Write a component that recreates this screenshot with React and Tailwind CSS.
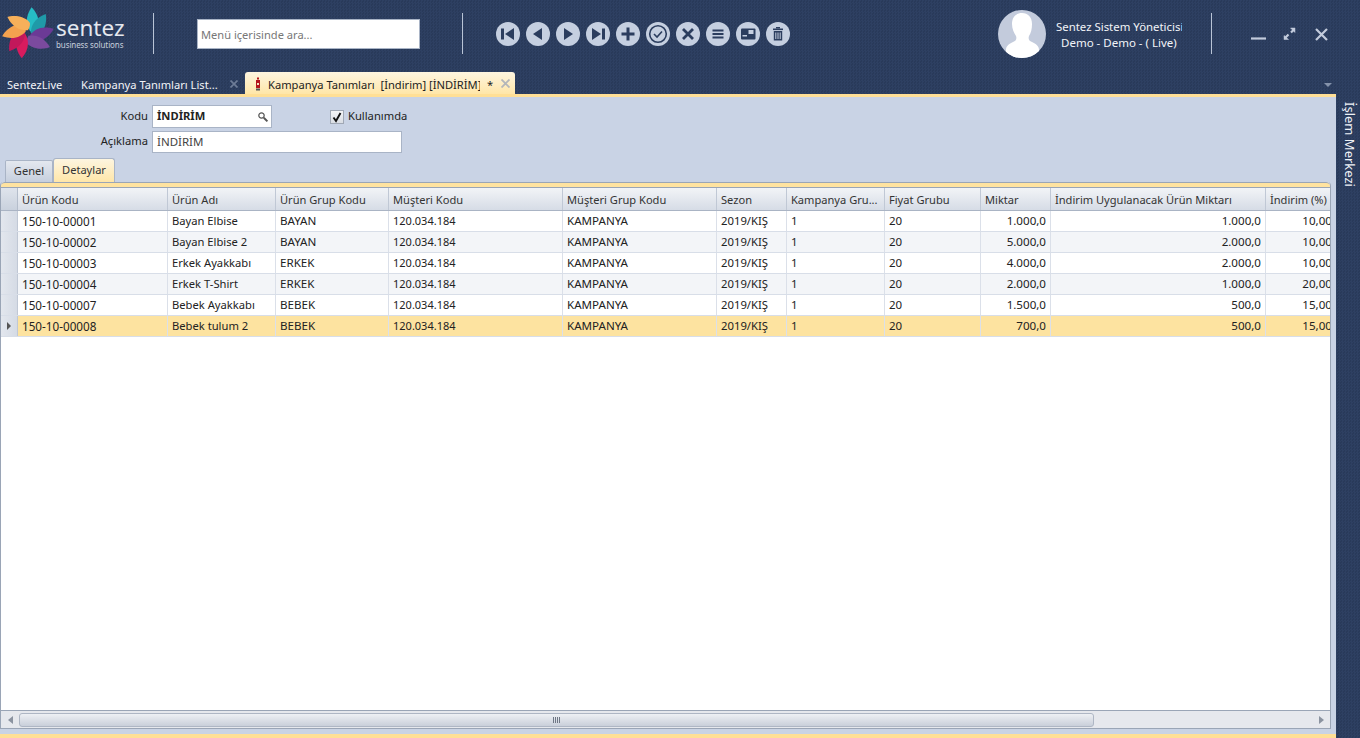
import React from "react";

const columns = [
  { title: "Ürün Kodu", w: "w-[150px]", size: "text-[11.7px]" },
  { title: "Ürün Adı", w: "w-[108px]", size: "text-[11.2px]" },
  { title: "Ürün Grup Kodu", w: "w-[113px]", size: "text-[11.6px]" },
  { title: "Müşteri Kodu", w: "w-[174px]", size: "text-[11px]" },
  { title: "Müşteri Grup Kodu", w: "w-[154px]", size: "text-[11.6px]" },
  { title: "Sezon", w: "w-[70px]", size: "text-[11.3px]" },
  { title: "Kampanya Gru...", w: "w-[98px]", size: "text-[11.5px]" },
  { title: "Fiyat Grubu", w: "w-[96px]", size: "text-[11.5px]" },
  { title: "Miktar", w: "w-[70px]", size: "text-[11.6px]", right: true },
  { title: "İndirim Uygulanacak Ürün Miktarı", w: "w-[215px]", size: "text-[11.6px]", right: true },
  { title: "İndirim (%)", w: "w-[71px]", size: "text-[11.6px]", right: true },
];

const rows = [
  ["150-10-00001", "Bayan Elbise", "BAYAN", "120.034.184", "KAMPANYA", "2019/KIŞ", "1", "20", "1.000,0", "1.000,0", "10,00"],
  ["150-10-00002", "Bayan Elbise 2", "BAYAN", "120.034.184", "KAMPANYA", "2019/KIŞ", "1", "20", "5.000,0", "2.000,0", "10,00"],
  ["150-10-00003", "Erkek Ayakkabı", "ERKEK", "120.034.184", "KAMPANYA", "2019/KIŞ", "1", "20", "4.000,0", "2.000,0", "10,00"],
  ["150-10-00004", "Erkek T-Shirt", "ERKEK", "120.034.184", "KAMPANYA", "2019/KIŞ", "1", "20", "2.000,0", "1.000,0", "20,00"],
  ["150-10-00007", "Bebek Ayakkabı", "BEBEK", "120.034.184", "KAMPANYA", "2019/KIŞ", "1", "20", "1.500,0", "500,0", "15,00"],
  ["150-10-00008", "Bebek tulum 2", "BEBEK", "120.034.184", "KAMPANYA", "2019/KIŞ", "1", "20", "700,0", "500,0", "15,00"],
];

const navy = "#2b3d5e";

// toolbar glyphs, drawn on a 24x24 circle
const toolIcons = [
  <g key="first" fill={navy}><rect x="5" y="6.5" width="3" height="11" /><path d="M18 6v12l-9-6z" /></g>,
  <path key="prev" fill={navy} d="M16 6v12l-9-6z" />,
  <path key="next" fill={navy} d="M8 6v12l9-6z" />,
  <g key="last" fill={navy}><rect x="16" y="6.5" width="3" height="11" /><path d="M6 6v12l9-6z" /></g>,
  <path key="plus" fill={navy} d="M10.5 5.5h3v5h5v3h-5v5h-3v-5h-5v-3h5z" />,
  <g key="ok" fill="none" stroke={navy}><circle cx="12" cy="12" r="8.3" strokeWidth="1.6" /><path d="M8 12l3 3 5-5.5" strokeWidth="1.6" /></g>,
  <path key="close" stroke={navy} strokeWidth="2.8" d="M7 7l10 10M17 7L7 17" />,
  <g key="menu" fill={navy}><rect x="6.5" y="7.5" width="11" height="2" /><rect x="6.5" y="11" width="11" height="2" /><rect x="6.5" y="14.5" width="11" height="2" /></g>,
  <g key="card"><rect x="5" y="6.5" width="14.5" height="11" rx="1" fill={navy} /><rect x="12.5" y="8" width="5" height="4" fill="#c5cfe0" /><rect x="6.5" y="13" width="4.5" height="1.5" fill="#c5cfe0" /></g>,
  <g key="trash" fill={navy}><rect x="7" y="6.5" width="10" height="1.6" /><rect x="10" y="5" width="4" height="1.5" /><path d="M7.8 9h8.4v9.5H7.8zM9.3 10.5v6.5h1v-6.5zM11.5 10.5v6.5h1v-6.5zM13.7 10.5v6.5h1v-6.5z" fillRule="evenodd" /></g>,
];

function Logo() {
  const petal = "M0 0C-5 -5 -8 -13 -3 -24C2 -21 9 -12 7 -3C5 -1 2 0 0 0Z";
  const petals = [
    [10, "#26bcc4"],
    [45, "#1f9aa8"],
    [83, "#6b3a96"],
    [125, "#7b4a9e"],
    [196, "#d81b5e"],
    [228, "#c2185b"],
    [265, "#f4a24f"],
    [310, "#f7b05a"],
  ];
  return (
    <svg width="54" height="54" viewBox="-27 -27 54 54" className="shrink-0">
      {petals.map(([r, c]) => (
        <path key={r} d={petal} fill={c} transform={`rotate(${r}) translate(2 -2)`} />
      ))}
    </svg>
  );
}

function Avatar() {
  return (
    <svg width="48" height="48" viewBox="0 0 48 48" className="shrink-0">
      <circle cx="24" cy="24" r="24" fill="#c3cbdc" />
      <clipPath id="av"><circle cx="24" cy="24" r="24" /></clipPath>
      <g clipPath="url(#av)" fill="#fff">
        <path d="M24 3c6 0 10 4 10 11 0 5-1 9-3 12-1 3 0 5 3 6 4 2 7 4 7 8v8H8v-8c0-4 3-6 7-8 3-1 4-3 3-6-2-3-4-7-4-12 0-7 4-11 10-11z" />
      </g>
    </svg>
  );
}

function Sep() {
  return <div className="w-px h-[41px] bg-[#b9c4d6] shrink-0 -mt-[3px]" />;
}

function Header() {
  return (
    <div className="h-[70px] flex items-center shrink-0 text-white">
      <div className="ml-[1px] flex items-center w-[152px] shrink-0 -mt-[4px]">
        <Logo />
        <div className="ml-[1px] -mt-[1px]">
          <div className="text-[22.5px] leading-[24px] text-[#e4e8ef]">sentez</div>
          <div className="text-[8px] leading-[10px] text-[#c7cfdc] tracking-[-0.1px]">business solutions</div>
        </div>
      </div>
      <Sep />
      <input
        placeholder="Menü içerisinde ara..."
        className="ml-[43px] w-[223px] h-[30px] bg-white px-[3px] text-[11.1px] text-black placeholder:text-[#777] border border-[#a9b4c6] shrink-0 -mt-[2px] outline-none"
      />
      <div className="ml-[42px]"><Sep /></div>
      <div className="ml-[33px] flex gap-[6px] shrink-0 -mt-[2px]">
        {toolIcons.map((g, i) => (
          <svg key={i} width="24" height="24" viewBox="0 0 24 24">
            <circle cx="12" cy="12" r="12" fill="#c5cfe0" />
            {g}
          </svg>
        ))}
      </div>
      <div className="ml-[208px] -mt-[2px]"><Avatar /></div>
      <div className="ml-[10px] w-[126px] text-[11.4px] leading-[16px] text-[#f2f4f8] shrink-0 overflow-hidden">
        <div className="whitespace-nowrap">Sentez Sistem Yöneticisi</div>
        <div className="whitespace-nowrap ml-[5px] w-[116px] overflow-hidden text-[11.5px]">Demo - Demo - ( Live)</div>
      </div>
      <div className="ml-[29px]"><Sep /></div>
      <svg width="110" height="20" viewBox="0 0 110 20" className="ml-[31px] shrink-0 -mt-[3px]" fill="none" stroke="#c3cbdc" strokeWidth="2.2">
        <path d="M8 14.5h15" />
        <path d="M42 14l3.5-3.5M48 8.5L51 5.5" />
        <path d="M41 11.5v4h4.5z M52 4h-4.5l4.5 4.5z" fill="#c3cbdc" strokeWidth="0.5" />
        <path d="M73 5l11 11M84 5L73 16" />
      </svg>
    </div>
  );
}

function TabStrip() {
  return (
    <div className="h-[24px] flex shrink-0 relative text-[11.15px]">
      <div className="ml-[7px] w-[56px] pt-[7px] text-[#f2f4f8] leading-[16px] whitespace-nowrap">SentezLive</div>
      <div className="ml-[18px] w-[136px] pt-[7px] text-[#f2f4f8] leading-[16px] whitespace-nowrap">Kampanya Tanımları List...</div>
      <svg width="8" height="8" viewBox="0 0 8 8" className="ml-[13px] mt-[10px]" stroke="#6d7c97" strokeWidth="1.7">
        <path d="M0.5 0.5l7 7M7.5 0.5l-7 7" />
      </svg>
      <div className="ml-[7px] mt-[2px] w-[270px] h-[22px] pt-[4px] rounded-t-[3px] bg-gradient-to-b from-[#fdf5e0] to-[#ffe6a8] flex items-center text-[#222] whitespace-pre">
        <svg width="6" height="14" viewBox="0 0 6 14" className="ml-[10px] -mt-[3px]">
          <rect x="1" y="3" width="4" height="8" fill="#b3141d" />
          <rect x="2" y="0.5" width="2" height="2" fill="#b3141d" />
          <rect x="2" y="6" width="2" height="2" fill="#f3e3c0" />
          <rect x="1" y="11.5" width="4" height="2" fill="#555" />
        </svg>
        <span className="ml-[7px] w-[212px] overflow-hidden">Kampanya Tanımları  [İndirim] [İNDİRİM]</span>
        <span className="ml-[7px] w-[9px]">*</span>
        <svg width="9" height="9" viewBox="0 0 9 9" className="ml-[5px] -mt-[3px]" stroke="#b4b6ba" strokeWidth="1.8">
          <path d="M0.5 0.5l8 8M8.5 0.5l-8 8" />
        </svg>
      </div>
      <div className="absolute right-[28px] top-[13px] w-0 h-0 border-l-[4px] border-r-[4px] border-t-[4px] border-l-transparent border-r-transparent border-t-[#8593ab]" />
    </div>
  );
}

function Form() {
  return (
    <div className="shrink-0 text-[11.2px] text-[#222]">
      <div className="flex items-center pt-[8px] h-[31px]">
        <label className="w-[148px] text-right">Kodu</label>
        <div className="ml-[4px] w-[120px] h-[23px] bg-white border border-[#a9b4c6] flex items-center justify-between pl-[4px] pr-[2px] font-bold">
          İNDİRİM
          <svg width="12" height="12" viewBox="0 0 12 12" fill="none" stroke="#555" className="mt-[1px]">
            <circle cx="4.5" cy="4.5" r="2.7" strokeWidth="1.2" />
            <path d="M6.8 6.8l3.6 3.6" strokeWidth="2" />
          </svg>
        </div>
        <div className="ml-[58px] w-[14px] h-[14px] bg-gradient-to-b from-[#f4f5f7] to-[#d9dde4] border border-[#a0a8b5] flex items-center justify-center">
          <svg width="12" height="12" viewBox="0 0 12 12" fill="none" stroke="#111" strokeWidth="1.9">
            <path d="M2.5 6.5l2.5 3.5 4.5-8" />
          </svg>
        </div>
        <span className="ml-[4px]">Kullanımda</span>
      </div>
      <div className="flex items-center mt-[2px] h-[23px]">
        <label className="w-[148px] text-right">Açıklama</label>
        <div className="ml-[4px] w-[250px] h-[22px] bg-white border border-[#a9b4c6] flex items-center px-[4px] text-[11.5px] text-[#444]">İNDİRİM</div>
      </div>
    </div>
  );
}

function InnerTabs() {
  return (
    <div className="flex items-end h-[29px] pl-[5px] shrink-0 text-[11.1px] text-[#333]">
      <div className="w-[48px] h-[22px] bg-gradient-to-b from-[#e4e8ef] to-[#c6cfde] border border-b-0 border-[#a9b4c6] rounded-t-[2px] flex items-center justify-center">Genel</div>
      <div className="w-[62px] h-[24px] bg-gradient-to-b from-[#fdf5e0] to-[#ffe6a8] border border-b-0 border-[#a9b4c6] rounded-t-[3px] flex items-center justify-center">Detaylar</div>
    </div>
  );
}

function Grid() {
  return (
    <div className="w-[1331px] h-[547px] shrink-0 flex flex-col bg-white border border-t-0 border-[#9aa5b6] rounded-t-[4px] overflow-hidden text-[#222]">
      <div className="h-[6px] shrink-0 bg-[#ffe3a0] border-t border-b border-[#9aa5b6] rounded-t-[4px]" />
      <div className="flex-1 overflow-hidden">
        <div className="flex h-[23px] w-max border-b border-[#aab4c4] bg-gradient-to-b from-[#f2f4f7] to-[#d6dce6] text-[11.1px] text-[#333]">
          <div className="w-[17px] border-r border-[#b4bdcb] bg-gradient-to-b from-[#dfe4ec] to-[#c9d1dd]" />
          {columns.map((c) => (
            <div key={c.title} className={`${c.w} px-[4px] border-r border-[#c0c8d5] leading-[24px] whitespace-nowrap overflow-hidden`}>
              {c.title}
            </div>
          ))}
        </div>
        {rows.map((row, i) => {
          const selected = i === rows.length - 1;
          const bg = selected ? "bg-[#fde3a0]" : i % 2 === 1 ? "bg-[#f3f5f8]" : "bg-white";
          return (
            <div key={row[0]} className={`flex h-[21px] w-max border-b border-[#d8dee8] ${bg}`}>
              <div className="w-[17px] border-r border-[#c0c8d5] bg-gradient-to-r from-[#e3e7ee] to-[#d5dbe5] flex items-center justify-center">
                {selected && <div className="w-0 h-0 border-t-[4px] border-b-[4px] border-l-[4px] border-t-transparent border-b-transparent border-l-[#555]" />}
              </div>
              {row.map((val, j) => (
                <div
                  key={j}
                  className={`${columns[j].w} ${columns[j].size} px-[4px] border-r border-[#dbe0e9] leading-[20px] whitespace-nowrap ${columns[j].right ? "text-right" : ""}`}
                >
                  {val}
                </div>
              ))}
            </div>
          );
        })}
      </div>
      {/* horizontal scrollbar */}
      <div className="h-[18px] shrink-0 border-t border-[#9aa5b6] bg-[#e6e8ed] flex items-center">
        <div className="w-[18px] flex justify-center">
          <div className="w-0 h-0 border-t-[4px] border-b-[4px] border-r-[5px] border-t-transparent border-b-transparent border-r-[#8b93a0]" />
        </div>
        <div className="w-[1075px] h-[14px] rounded-[3px] border border-[#aeb6c4] bg-gradient-to-b from-[#eef0f4] to-[#c9cfda] flex items-center justify-center gap-[1px]">
          <span className="w-px h-[6px] bg-[#6f7785]" />
          <span className="w-px h-[6px] bg-[#6f7785]" />
          <span className="w-px h-[6px] bg-[#6f7785]" />
          <span className="w-px h-[6px] bg-[#6f7785]" />
        </div>
        <div className="flex-1" />
        <div className="w-[17px] flex justify-center">
          <div className="w-0 h-0 border-t-[4px] border-b-[4px] border-l-[5px] border-t-transparent border-b-transparent border-l-[#8b93a0]" />
        </div>
      </div>
    </div>
  );
}

export default function App() {
  return (
    <div className="w-[1360px] h-[738px] overflow-hidden flex flex-col font-['Open_Sans',sans-serif] bg-[#2b3d5e] bg-[repeating-conic-gradient(#2e4062_0_25%,#293a5a_0_50%)] bg-[length:3px_3px]">
      <Header />
      <TabStrip />
      <div className="flex-1 flex min-h-0">
        <div className="w-[1336px] flex flex-col border-t-[3px] border-b-[4px] border-[#ffdf96] bg-[#c9d3e5]">
          <Form />
          <InnerTabs />
          <Grid />
        </div>
        <div className="flex-1 flex justify-center pt-[8px] pl-[3px]">
          <span className="[writing-mode:vertical-rl] text-[13px] text-[#eef1f6] leading-none">İşlem Merkezi</span>
        </div>
      </div>
    </div>
  );
}
